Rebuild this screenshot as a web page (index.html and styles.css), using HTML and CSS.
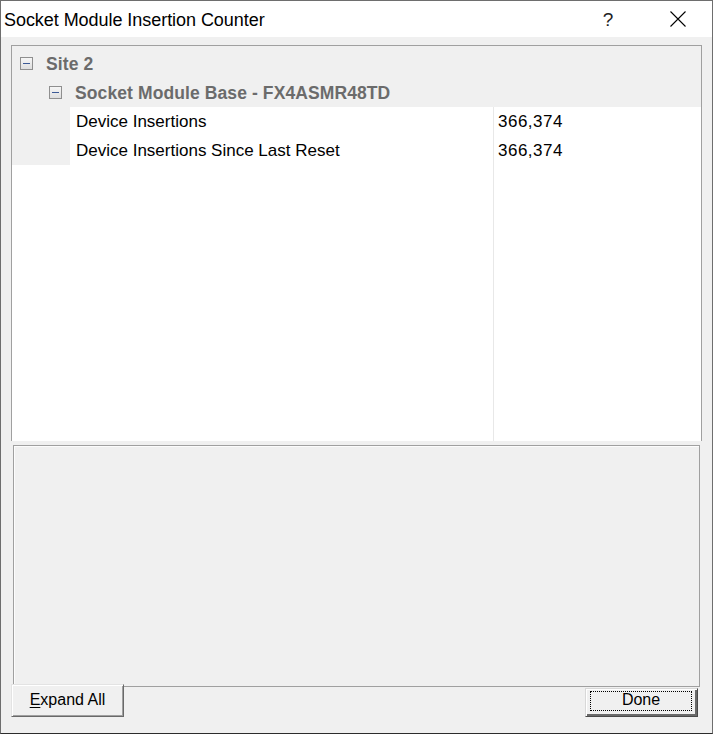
FILE: index.html
```html
<!DOCTYPE html>
<html lang="en">
<head>
    <title>Socket Module Insertion Counter</title>
    <meta charset="utf-8">
    <link rel="stylesheet" href="styles.css">
</head>
<body>
    <div class="window">
        <div class="titlebar">
            <span class="title">Socket Module Insertion Counter</span>
            <span class="help">?</span>
            <span class="close">
                <svg width="16" height="16" viewBox="0 0 16 16">
                    <path d="M0.5 0.5 L15.5 15.5 M15.5 0.5 L0.5 15.5" stroke="#000" stroke-width="1.1" fill="none"/>
                </svg>
            </span>
        </div>

        <div class="content">
            <div class="tree">
                <div class="node level1"><span class="toggle"></span><span class="label">Site 2</span></div>
                <div class="node level2"><span class="toggle"></span><span class="label">Socket Module Base - FX4ASMR48TD</span></div>

                <div class="prop">
                    <span class="indent"></span>
                    <span class="name">Device Insertions</span>
                    <span class="value">366,374</span>
                </div>
                <div class="prop">
                    <span class="indent"></span>
                    <span class="name">Device Insertions Since Last Reset</span>
                    <span class="value">366,374</span>
                </div>

                <div class="filler"><div class="filler-col"></div></div>
            </div>

            <div class="details"></div>

            <div class="buttons">
                <button class="btn"><u>E</u>xpand All</button>
                <button class="btn default"><span class="focus">Done</span></button>
            </div>
        </div>
    </div>
</body>
</html>
```

FILE: styles.css
```css
html, body {
    margin: 0;
    padding: 0;
    background: #f0f0f0;
}

body {
    font-family: "Liberation Sans", Arial, sans-serif;
    font-size: 17px;
    color: #000;
}

.window {
    width: 713px;
    height: 734px;
    box-sizing: border-box;
    border: 1px solid #6e6e6e;
    border-bottom-color: #2c2c2c;
    display: flex;
    flex-direction: column;
    background: #f0f0f0;
}

/* title bar */
.titlebar {
    height: 36px;
    background: #fff;
    display: flex;
    align-items: center;
    padding-left: 3px;
}

.title {
    font-size: 18px;
    letter-spacing: -0.05px;
    flex: 1;
    padding-top: 2px;
}

.help {
    width: 20px;
    text-align: center;
    font-size: 19px;
    color: #222;
    margin-right: 52px;
    padding-top: 1px;
}

.close {
    width: 16px;
    height: 16px;
    margin-right: 26px;
    display: flex;
}

/* content */
.content {
    flex: 1;
    display: flex;
    flex-direction: column;
    padding: 8px 10px 0 10px;
}

.tree {
    height: 396px;
    box-sizing: border-box;
    border: 1px solid #a0a0a0;
    border-bottom: none;
    padding-top: 3px;
    display: flex;
    flex-direction: column;
    background: #f0f0f0;
}

.node {
    height: 29px;
    display: flex;
    align-items: center;
    font-weight: bold;
    font-size: 17.5px;
    color: #6b6b6b;
}

.node .label {
    padding-top: 1px;
    letter-spacing: 0.1px;
}

.level1 {
    padding-left: 8px;
}

.level2 {
    padding-left: 37px;
}

.toggle {
    position: relative;
    width: 13px;
    height: 13px;
    box-sizing: border-box;
    border: 1px solid #8f8f8f;
    background: linear-gradient(#f6f6f6, #dedede);
    margin-right: 13px;
}

.toggle::after {
    content: "";
    position: absolute;
    left: 2px;
    top: 5px;
    width: 7px;
    height: 1px;
    background: #3c5a96;
}

.prop {
    display: grid;
    grid-template-columns: 58px 423px 1fr;
    height: 29px;
}

.prop .indent {
    background: #f0f0f0;
}

.prop .name,
.prop .value {
    background: #fff;
    border-bottom: 1px solid #ececec;
    line-height: 30px;
}

.prop .name {
    padding-left: 6px;
}

.prop .value {
    border-left: 1px solid #e8e8e8;
    padding-left: 4px;
    letter-spacing: 0.5px;
}

.filler {
    flex: 1;
    background: #fff;
}

.filler-col {
    width: 481px;
    height: 100%;
    border-right: 1px solid #e8e8e8;
}

.details {
    height: 242px;
    box-sizing: border-box;
    margin: 4px 2px 0 2px;
    border: 1px solid #a0a0a0;
    box-shadow: inset 1px 1px 0 #fcfcfc;
    background: #f0f0f0;
}

/* buttons */
.buttons {
    display: flex;
    justify-content: space-between;
    align-items: flex-end;
    margin-top: -3px;
    padding-right: 4px;
}

.btn {
    font-family: "Liberation Sans", Arial, sans-serif;
    font-size: 16px;
    color: #000;
    width: 113px;
    height: 33px;
    box-sizing: border-box;
    background: #f0f0f0;
    border: 1px solid;
    border-color: #e3e3e3 #696969 #696969 #e3e3e3;
    box-shadow: inset 1px 1px 0 #fff, inset -1px -1px 0 #a0a0a0;
    padding: 0 0 2px 0;
    position: relative;
}

.btn u {
    text-decoration-thickness: 1px;
    text-underline-offset: 2px;
}

.default {
    height: 29px;
    border-color: #d8d8d8 #4a4a4a #4a4a4a #d8d8d8;
    box-shadow: inset 1px 1px 0 #fff, inset -2px -2px 0 #696969;
    padding: 2px 5px 5px 4px;
}

.focus {
    display: flex;
    align-items: center;
    justify-content: center;
    height: 100%;
    box-sizing: border-box;
    border: 1px dotted #000;
    padding-bottom: 2px;
}
```
